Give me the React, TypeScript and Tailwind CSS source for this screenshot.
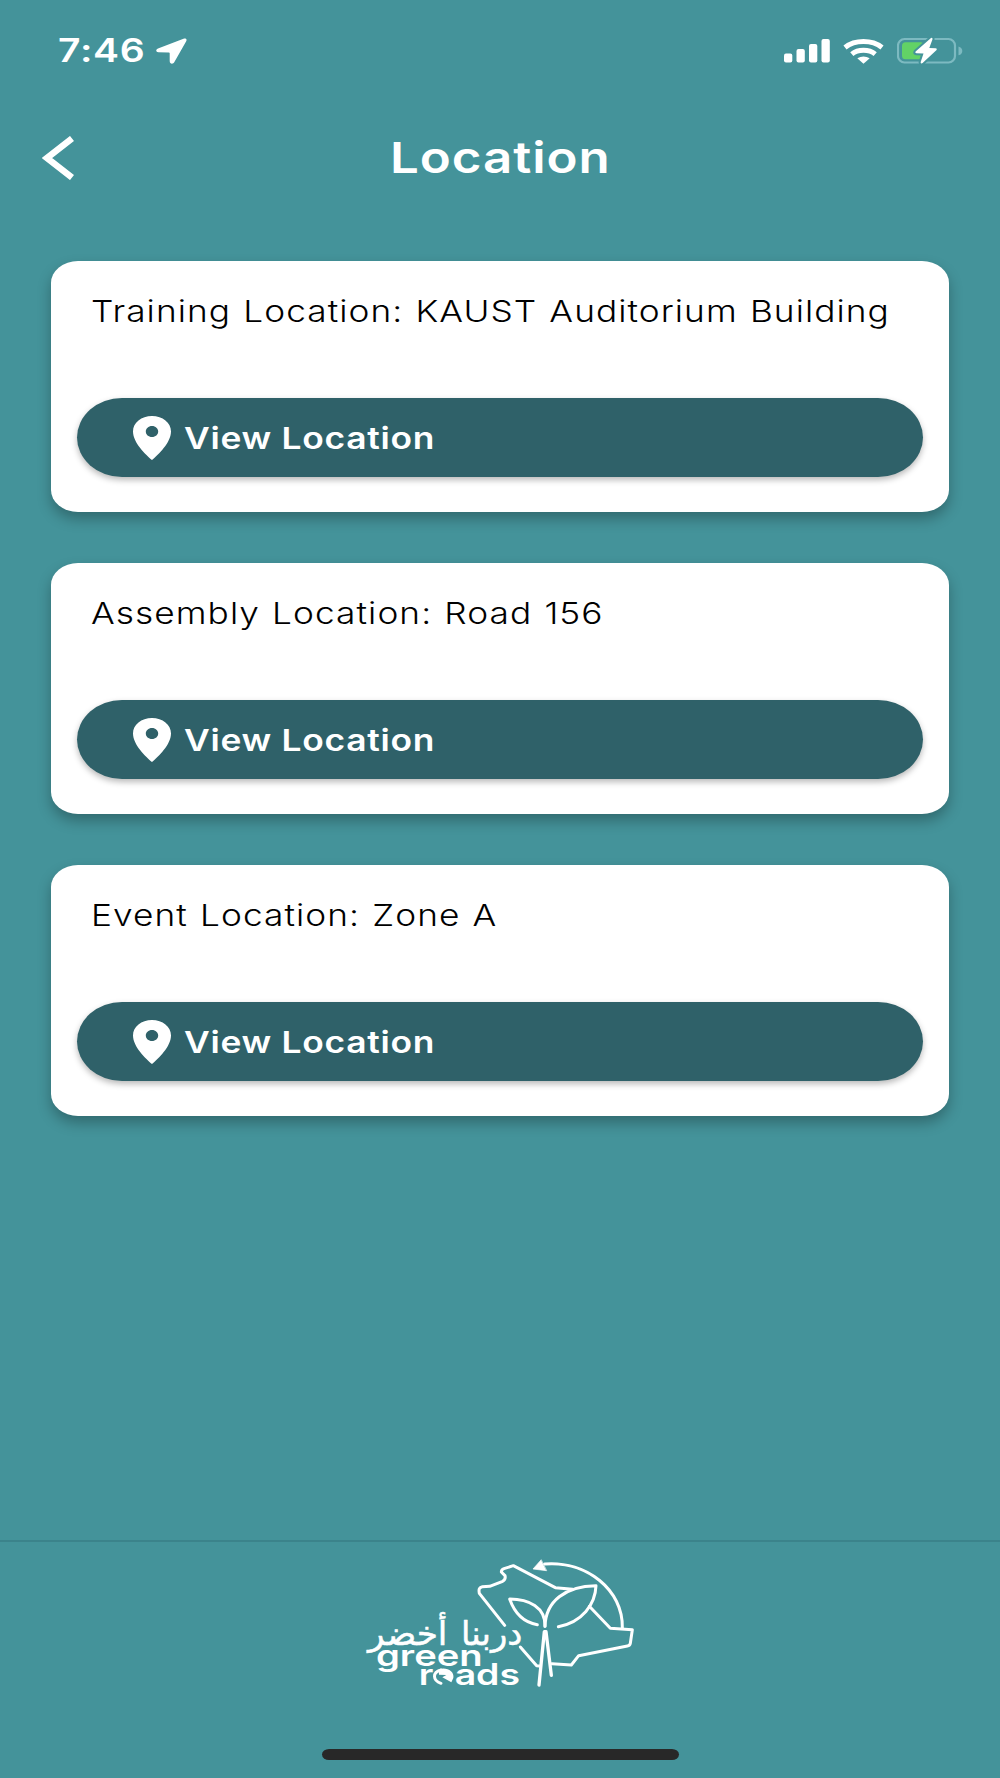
import React from "react"

const locations = [
  "Training Location: KAUST Auditorium Building",
  "Assembly Location: Road 156",
  "Event Location: Zone A",
]

function StatusBar() {
  return (
    <div className="flex h-[102px] items-center justify-between pl-[58px] pr-[37px]">
      <div className="flex items-center">
        <span className="w-[98px] origin-left scale-x-[1.22] whitespace-nowrap text-[32px] font-[580] leading-none tracking-[0.6px]">7:46</span>
        <svg className="h-[26px] w-[31px]" viewBox="0 0 31 26" fill="#fff">
          <path d="M27.5 .7 2 10.6C-.6 11.6-.2 14.2 2.400 14.300L12.500 14.500C13.300 14.500 13.700 14.800 13.700 15.500V23C13.700 26 17 26.600 18.400 24L30.200 3.200C31.300 1.200 29.800-.1 27.500.7Z" />
        </svg>
      </div>
      <div className="flex items-center">
        <svg className="h-6 w-[46px]" viewBox="0 0 46 24" fill="#fff">
          <rect x="0" y="14.500" width="8.300" height="9" rx="2" />
          <rect x="12.500" y="10" width="8.300" height="13.500" rx="2" />
          <rect x="25" y="5" width="8.300" height="18.500" rx="2" />
          <rect x="37.500" y="0" width="8.300" height="23.500" rx="2" />
        </svg>
        <svg className="ml-[13px] h-[25px] w-[41px]" viewBox="0 0 41 25" fill="none" stroke="#fff" strokeWidth="5">
          <path d="M2 8.500Q9.500 2.600 20.500 2.600T39 8.500" />
          <path d="M8.800 15.200Q13.500 11.300 20.500 11.300T32.200 15.200" />
          <path d="M14.300 19.300Q20.500 15.700 26.700 19.300L20.500 24.800Z" fill="#fff" stroke="none" />
        </svg>
        <svg className="ml-[13px] h-[28px] w-[66px]" viewBox="0 0 66 28">
          <rect x="1" y="2" width="57" height="23.500" rx="6.500" fill="none" stroke="#7dbac1" strokeWidth="2.200" />
          <path d="M61.500 9.500Q65.300 10.500 65.300 14T61.500 18.200Z" fill="#7dbac1" />
          <rect x="5" y="5.300" width="22" height="17" rx="3.500" fill="#62d266" />
          <path d="M34 .9 18.600 14.600Q17.600 16 19.500 16.300L26.500 16.500 23.600 25.200Q23.800 27 25.600 26.100L39.600 13Q40.500 11.400 38.600 11.200L32.300 11 35.500 2.300Q35.800.300 34 .9Z" fill="#fff" stroke="#44939a" strokeWidth="4" paintOrder="stroke" />
        </svg>
      </div>
    </div>
  )
}

function PinIcon() {
  return (
    <svg className="h-11 w-[38px]" viewBox="0 0 38 44" fill="#fff">
      <path fillRule="evenodd" d="M19 0C8.400 0 0 6.700 0 15.500 0 26.500 12.500 38.500 19 44 25.500 38.500 38 26.500 38 15.500 38 6.700 29.600 0 19 0ZM19 10C22.600 10 25.200 12.500 25.200 15.500S22.600 21 19 21 12.800 18.500 12.800 15.500 15.400 10 19 10Z" />
    </svg>
  )
}

function LocationCard({ title }: { title: string }) {
  return (
    <div className="flex h-[251px] flex-col rounded-[27px/22px] bg-white px-[26px] shadow-[0_7px_14px_rgba(0,0,0,0.28)]">
      <p className="ml-[14px] mt-[31px] origin-left scale-x-[1.175] self-start whitespace-nowrap text-[30px] font-[360] leading-[38px] tracking-[0.9px] [word-spacing:1px] text-black">{title}</p>
      <button className="mt-[68px] flex h-[79px] w-full items-center rounded-[45px/39.5px] bg-[#2f6169] pl-14 text-white shadow-[0_3px_6px_rgba(0,0,0,0.28)]">
        <PinIcon />
        <span className="ml-[13px] origin-left scale-x-[1.18] whitespace-nowrap text-[30px] font-[580] leading-none tracking-[0.6px]">View Location</span>
      </button>
    </div>
  )
}

function Logo() {
  return (
    <svg className="-mt-[12px] h-[180px] w-[320px]" viewBox="0 0 960 540" fill="none" stroke="#fff" strokeWidth="9" strokeLinecap="round" strokeLinejoin="round">
      <path d="M494 286 418 190Q414 172 427 170L449 169 488 154Q498 148 495 137L484 126Q484 119 492 116L520 107 646 173 698 178" />
      <path d="M748 229 811 295 877 299 871 340Q870 347 862 348L716 377 694 405 636 401" />
      <path d="M541 351 590 407 598 408" />
      <path d="M614 102C740 92 850 180 847 294" />
      <path d="M603 90 579 117 619 122Z" fill="#fff" stroke="#fff" strokeWidth="2" />
      <path d="M615 289C617 232 566 207 509 207 524 250 550 277 592 284" />
      <path d="M615 289C617 214 676 168 768 167 766 223 727 276 655 290" />
      <path d="M597 465 613 305 618 305 634 436" strokeWidth="10" />
      <path d="M303 460C278 452 276 427 303 420" />
      <g fill="#fff" stroke="none">
        <text x="547" y="345" direction="rtl" textLength="184" lengthAdjust="spacingAndGlyphs" stroke="#fff" strokeWidth="1.500" className="font-['DejaVu_Sans',sans-serif] text-[100px]">دربنا</text>
        <text x="322" y="345" direction="rtl" textLength="238" lengthAdjust="spacingAndGlyphs" stroke="#fff" strokeWidth="1.500" className="font-['DejaVu_Sans',sans-serif] text-[100px]">أخضر</text>
        <text x="108" y="408" textLength="320" lengthAdjust="spacingAndGlyphs" className="font-['Inter',sans-serif] text-[88px] font-[560]">green</text>
        <text x="236" y="465" textLength="44" lengthAdjust="spacingAndGlyphs" className="font-['Inter',sans-serif] text-[88px] font-[560]">r</text>
        <text x="344" y="465" textLength="196" lengthAdjust="spacingAndGlyphs" className="font-['Inter',sans-serif] text-[88px] font-[560]">ads</text>
        <path d="M296 418C320 410 344 424 340 444L334 457 307 442 319 435 297 434Z" />
      </g>
    </svg>
  )
}

export default function App() {
  return (
    <div className="flex h-[1778px] w-[1000px] flex-col overflow-hidden bg-[#44939a] font-['Inter',sans-serif] text-white">
      <StatusBar />
      <header className="flex h-[112px] items-center pl-[42px]">
        <svg className="mb-[1px] h-11 w-8" viewBox="0 0 32 44" fill="none" stroke="#fff" strokeWidth="6.500">
          <path d="M30 2.500 5 22 30 41.500" />
        </svg>
        <h1 className="mb-[2px] ml-[316px] origin-left scale-x-[1.187] whitespace-nowrap text-[43px] font-[580] leading-none tracking-[0.8px]">Location</h1>
      </header>
      <main className="flex flex-1 flex-col gap-[51px] px-[51px] pt-[47px]">
        {locations.map((title) => (
          <LocationCard key={title} title={title} />
        ))}
      </main>
      <footer className="flex h-[238px] flex-col items-center border-t-2 border-[#3b838b]">
        <Logo />
        <div className="mt-[39px] h-[11px] w-[357px] rounded-[7px/5.5px] bg-[#282828]" />
      </footer>
    </div>
  )
}
